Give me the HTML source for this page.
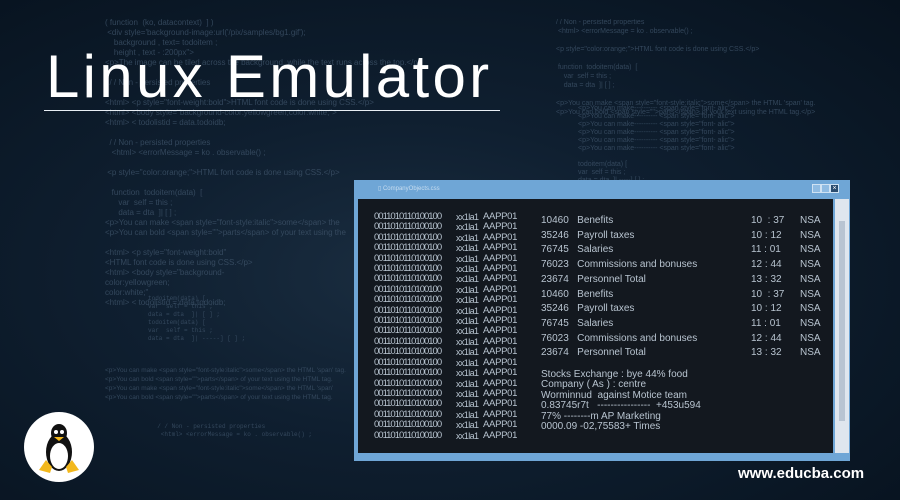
<!DOCTYPE html>
<html><head><style>
*{margin:0;padding:0;box-sizing:border-box}
body{width:900px;height:500px;overflow:hidden;background:radial-gradient(ellipse at 45% 55%,#1a2d40 0%,#0f1f30 40%,#07121e 100%);font-family:"Liberation Sans",sans-serif;position:relative}
.bg{position:absolute;color:#3d5268;font-size:8px;line-height:10px;white-space:pre;opacity:.8}
.title{position:absolute;left:46px;top:44px;color:#fff;font-size:60px;letter-spacing:3.3px;line-height:66px}
.line{position:absolute;left:44px;top:110px;width:456px;height:1px;background:#e8eef4}
.win{position:absolute;left:354px;top:180px;width:496px;height:281px;background:#6fa6d6}
.tt{position:absolute;left:24px;top:5px;color:#c8ddf0;font-size:6px}
.content{position:absolute;left:4px;top:19px;width:475px;height:254px;background:#13181f;color:#b8c4d0;font-size:10px}
.sb{position:absolute;left:481px;top:19px;width:14px;height:254px;background:#dfe6ee}
.sb div{position:absolute;left:4px;top:22px;width:6px;height:200px;background:#b8c4d2}
.l{position:absolute;top:13px;line-height:10.4px;white-space:pre;font-size:9.5px}
.r{position:absolute;left:183px;white-space:pre;line-height:10px}
.btn{position:absolute;top:4px;width:9px;height:9px;border:1px solid #cfe2f3;background:#8fbbe2}
.logo{position:absolute;left:24px;top:412px;width:70px;height:70px;border-radius:50%;background:#fff}
.url{position:absolute;left:738px;top:465px;color:#fff;font-size:15px;font-weight:bold}
</style></head><body>
<div class="bg" style="left:105px;top:18px">( function  (ko, datacontext)  ] )
 &lt;div style='background-image:url('/pix/samples/bg1.gif');
    background , text= todoitem ;
    height , text - :200px"&gt;
&lt;p&gt;The image can be tiled across the background, while the text runs across the top.&lt;/p&gt;

  / / Non - persisted properties

&lt;html&gt; &lt;p style="font-weight:bold"&gt;HTML font code is done using CSS.&lt;/p&gt;
&lt;html&gt; &lt;body style="background-color:yellowgreen;color:white;"&gt;
&lt;html&gt; &lt; todolistid = data.todoidb;

  / / Non - persisted properties
   &lt;html&gt; &lt;errorMessage = ko . observable() ;

 &lt;p style="color:orange;"&gt;HTML font code is done using CSS.&lt;/p&gt;

   function  todoitem(data)  [
      var  self = this ;
      data = dta  ]| [ ] ;
&lt;p&gt;You can make &lt;span style="font-style:italic"&gt;some&lt;/span&gt; the
&lt;p&gt;You can bold &lt;span style=""&gt;parts&lt;/span&gt; of your text using the

&lt;html&gt; &lt;p style="font-weight:bold"
&lt;HTML font code is done using CSS.&lt;/p&gt;
&lt;html&gt; &lt;body style="background-
color:yellowgreen;
color:white;"
&lt;html&gt; &lt; todolistid = data.todoidb;</div>
<div class="bg" style="left:148px;top:295px;font-family:'Liberation Mono',monospace;font-size:6px;line-height:8px">todoitem(data) [
var  self = this ;
data = dta  ]| [ ] ;
todoitem(data) [
var  self = this ;
data = dta  ]| -----] [ ] ;</div>
<div class="bg" style="left:105px;top:366px;font-size:6.5px;line-height:9px">&lt;p&gt;You can make &lt;span style="font-style:italic"&gt;some&lt;/span&gt; the HTML 'span' tag.
&lt;p&gt;You can bold &lt;span style=""&gt;parts&lt;/span&gt; of your text using the HTML tag.
&lt;p&gt;You can make &lt;span style="font-style:italic"&gt;some&lt;/span&gt; the HTML 'span'
&lt;p&gt;You can bold &lt;span style=""&gt;parts&lt;/span&gt; of your text using the HTML tag.</div>
<div class="bg" style="left:150px;top:423px;font-family:'Liberation Mono',monospace;font-size:6px;line-height:8px">  / / Non - persisted properties
   &lt;html&gt; &lt;errorMessage = ko . observable() ;</div>
<div class="bg" style="left:556px;top:18px;font-size:7px;line-height:9px">/ / Non - persisted properties
 &lt;html&gt; &lt;errorMessage = ko . observable() ;

&lt;p style="color:orange;"&gt;HTML font code is done using CSS.&lt;/p&gt;

 function  todoitem(data)  [
    var  self = this ;
    data = dta  ]| [ ] ;

&lt;p&gt;You can make &lt;span style="font-style:italic"&gt;some&lt;/span&gt; the HTML 'span' tag.
&lt;p&gt;You can bold &lt;span style=""&gt;parts&lt;/span&gt; of your text using the HTML tag.&lt;/p&gt;</div>
<div class="bg" style="left:578px;top:105px;font-size:7px;line-height:8px">&lt;p&gt;You can make---------- &lt;span style="font- alic"&gt;
&lt;p&gt;You can make---------- &lt;span style="font- alic"&gt;
&lt;p&gt;You can make---------- &lt;span style="font- alic"&gt;
&lt;p&gt;You can make---------- &lt;span style="font- alic"&gt;
&lt;p&gt;You can make---------- &lt;span style="font- alic"&gt;
&lt;p&gt;You can make---------- &lt;span style="font- alic"&gt;

todoitem(data) [
var  self = this ;
data = dta  ]| -----] [ ] ;</div>
<div class="title">Linux Emulator</div>
<div class="line"></div>
<div class="win">
<div class="tt">▯ CompanyObjects.css</div>
<div class="btn" style="left:458px"></div><div class="btn" style="left:467px"></div><div class="btn" style="left:476px;background:#2b4d70;color:#fff;font-size:7px;line-height:7px;text-align:center">×</div>
<div class="content">
<div class="l" style="left:16px;letter-spacing:-1px">0011010110100100
0011010110100100
0011010110100100
0011010110100100
0011010110100100
0011010110100100
0011010110100100
0011010110100100
0011010110100100
0011010110100100
0011010110100100
0011010110100100
0011010110100100
0011010110100100
0011010110100100
0011010110100100
0011010110100100
0011010110100100
0011010110100100
0011010110100100
0011010110100100
0011010110100100</div>
<div class="l" style="left:98px;font-size:9px;letter-spacing:-0.6px">xx1la1
xx1la1
xx1la1
xx1la1
xx1la1
xx1la1
xx1la1
xx1la1
xx1la1
xx1la1
xx1la1
xx1la1
xx1la1
xx1la1
xx1la1
xx1la1
xx1la1
xx1la1
xx1la1
xx1la1
xx1la1
xx1la1</div>
<div class="l" style="left:125px;letter-spacing:-0.3px">AAPP01
AAPP01
AAPP01
AAPP01
AAPP01
AAPP01
AAPP01
AAPP01
AAPP01
AAPP01
AAPP01
AAPP01
AAPP01
AAPP01
AAPP01
AAPP01
AAPP01
AAPP01
AAPP01
AAPP01
AAPP01
AAPP01</div>
<div class="r" style="top:15px;line-height:14.7px">10460   Benefits
35246   Payroll taxes
76745   Salaries
76023   Commissions and bonuses
23674   Personnel Total
10460   Benefits
35246   Payroll taxes
76745   Salaries
76023   Commissions and bonuses
23674   Personnel Total</div>
<div class="r" style="left:393px;top:15px;line-height:14.7px">10  : 37
10 : 12
11 : 01
12 : 44
13 : 32
10  : 37
10 : 12
11 : 01
12 : 44
13 : 32</div>
<div class="r" style="left:442px;top:15px;line-height:14.7px">NSA
NSA
NSA
NSA
NSA
NSA
NSA
NSA
NSA
NSA</div>
<div class="r" style="top:171px;line-height:10.4px">Stocks Exchange : bye 44% food
Company ( As ) : centre
Worminnud  against Motice team
0.83745r7t   ----------------  +453u594
77% --------m AP Marketing
0000.09 -02,75583+ Times</div>
</div>
<div class="sb"><div></div></div>
</div>
<div class="logo"><svg width="70" height="70" viewBox="0 0 70 70">
<ellipse cx="35" cy="40" rx="13" ry="19" fill="#111"/>
<ellipse cx="35" cy="44" rx="9" ry="13" fill="#fff"/>
<ellipse cx="35" cy="21" rx="8" ry="9" fill="#111"/>
<circle cx="32" cy="20" r="2" fill="#fff"/><circle cx="38" cy="20" r="2" fill="#fff"/>
<path d="M30 25 L40 25 L35 29Z" fill="#f3b81c"/>
<path d="M15 58 L22 48 L28 55 L26 61Z" fill="#f3b81c"/>
<path d="M55 58 L48 48 L42 55 L44 61Z" fill="#f3b81c"/>
</svg></div>
<div class="url">www.educba.com</div>
</body></html>
